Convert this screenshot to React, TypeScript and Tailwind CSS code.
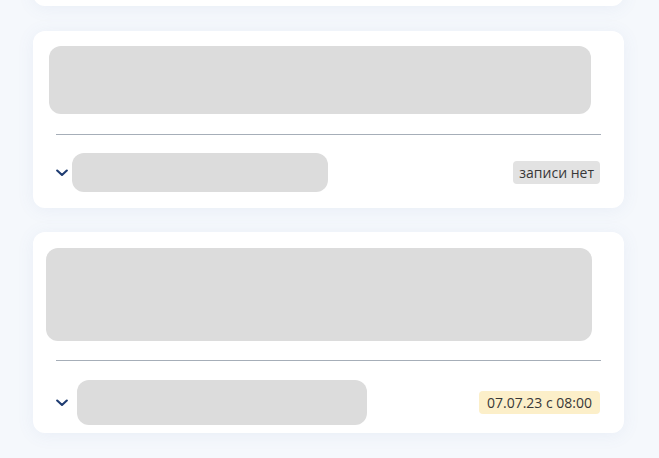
import React from "react";

function Chevron() {
  return (
    <svg width="12" height="8" viewBox="0 0 12 8" className="shrink-0">
      <path d="M1.2 1.5 L6 6 L10.8 1.5" fill="none" stroke="#1f3c72" strokeWidth="2.1" strokeLinecap="round" strokeLinejoin="round" />
    </svg>
  );
}

export default function App() {
  return (
    <div className="w-[659px] h-[458px] overflow-hidden bg-[#f5f8fc]" style={{ fontFamily: "'Open Sans', sans-serif" }}>
      <div className="ml-[33px] w-[591px] flex flex-col">
        <div className="-mt-[20px] h-[26px] rounded-[12px] bg-white shadow-[0_2px_18px_rgba(90,120,180,0.08)]" />

        <div className="mt-[25px] rounded-[12px] bg-white shadow-[0_2px_18px_rgba(90,120,180,0.08)] pt-[15px] pb-[16px]">
          <div className="ml-[16px] w-[542px] h-[68px] rounded-[12px] bg-[#dcdcdc]" />
          <div className="mx-[23px] mt-[20px] h-px bg-[#a6aeb8]" />
          <div className="mt-[18px] pl-[23px] pr-[24px] flex items-center">
            <Chevron />
            <div className="ml-[4px] w-[256px] h-[39px] rounded-[12px] bg-[#dcdcdc]" />
            <div className="ml-auto h-[23px] px-[6px] rounded-[4px] bg-[#e2e2e2] flex items-center text-[14px] text-[#383838] leading-none">
              записи нет
            </div>
          </div>
        </div>

        <div className="mt-[24px] rounded-[12px] bg-white shadow-[0_2px_18px_rgba(90,120,180,0.08)] pt-[16px] pb-[8px]">
          <div className="ml-[13px] w-[546px] h-[93px] rounded-[12px] bg-[#dcdcdc]" />
          <div className="mx-[23px] mt-[19px] h-px bg-[#a6aeb8]" />
          <div className="mt-[19px] pl-[23px] pr-[24px] flex items-center">
            <Chevron />
            <div className="ml-[9px] w-[290px] h-[45px] rounded-[12px] bg-[#dcdcdc]" />
            <div className="ml-auto h-[23px] px-[8px] rounded-[4px] bg-[#fcefc9] flex items-center text-[14px] text-[#383838] leading-none">
              07.07.23 с 08:00
            </div>
          </div>
        </div>
      </div>
    </div>
  );
}
